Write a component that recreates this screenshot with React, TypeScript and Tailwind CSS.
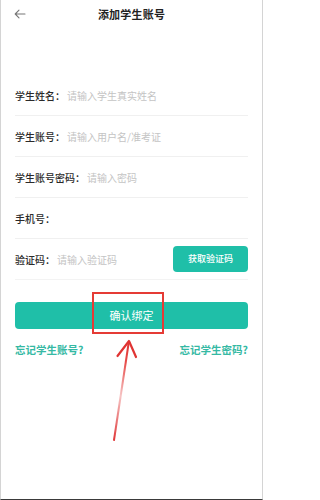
const rows = [
  { label: "学生姓名：", placeholder: "请输入学生真实姓名" },
  { label: "学生账号：", placeholder: "请输入用户名/准考证" },
  { label: "学生账号密码：", placeholder: "请输入密码" },
  { label: "手机号：", placeholder: "" },
]

export default function App() {
  return (
    <div
      className="relative w-[263px] h-[500px] bg-white border-x border-[#d4d4d4] border-b border-b-[#3a3a3a] overflow-hidden"
      style={{ fontFamily: '"Noto Sans CJK SC", "Noto Sans", sans-serif' }}
    >
      {/* Header */}
      <div className="relative h-[28px] flex items-center justify-center">
        <svg
          className="absolute left-[13px] top-[9px]"
          width="12"
          height="10"
          viewBox="0 0 12 10"
          fill="none"
          stroke="#777"
          strokeWidth="1.1"
          strokeLinecap="round"
          strokeLinejoin="round"
        >
          <path d="M11 5H1.5M5 1.2L1.2 5L5 8.8" />
        </svg>
        <h1 className="text-[11px] font-bold text-[#222] tracking-[0.2px]">添加学生账号</h1>
      </div>

      {/* Form */}
      <div className="mt-[47px] px-[14px]">
        {rows.map((r) => (
          <div key={r.label} className="h-[41px] flex items-center border-b border-[#f0f0f0]">
            <span className="text-[10px] text-[#2a2a2a] font-medium">{r.label}</span>
            <span className="ml-[2px] text-[10px] text-[#c4c4c4]">{r.placeholder}</span>
          </div>
        ))}
        <div className="h-[41px] flex items-center border-b border-[#f3f3f3]">
          <span className="text-[10px] text-[#2a2a2a] font-medium">验证码：</span>
          <span className="ml-[2px] text-[10px] text-[#c4c4c4]">请输入验证码</span>
          <button className="ml-auto w-[75px] h-[26px] rounded-[4px] bg-[#1fbfa8] text-white text-[9px] font-medium">
            获取验证码
          </button>
        </div>

        {/* Confirm */}
        <button className="mt-[22px] w-full h-[27px] rounded-[4px] bg-[#1fbfa8] text-white text-[11px]">
          确认绑定
        </button>

        <div className="mt-[13px] flex justify-between text-[10.5px] font-semibold text-[#35b9a4]">
          <span>忘记学生账号?</span>
          <span>忘记学生密码?</span>
        </div>
      </div>

      {/* Annotation: red box */}
      <div className="absolute left-[91px] top-[292px] w-[72px] h-[42px] border-2 border-[#e53b35]" />

      {/* Annotation: arrow */}
      <svg className="absolute left-0 top-0 pointer-events-none" width="263" height="500" viewBox="0 0 263 500">
        <defs>
          <linearGradient id="shaft" x1="113" y1="440" x2="128" y2="342" gradientUnits="userSpaceOnUse">
            <stop offset="0" stopColor="#e0393a" />
            <stop offset="0.45" stopColor="#f6c4c4" />
            <stop offset="0.8" stopColor="#e64a48" />
            <stop offset="1" stopColor="#e03433" />
          </linearGradient>
        </defs>
        <path d="M113 440 L127.5 344" stroke="url(#shaft)" strokeWidth="2" strokeLinecap="round" fill="none" />
        <path
          d="M116.5 356 L128 341 L135 357"
          stroke="#e03433"
          strokeWidth="2.2"
          strokeLinecap="round"
          strokeLinejoin="round"
          fill="none"
        />
      </svg>
    </div>
  )
}
